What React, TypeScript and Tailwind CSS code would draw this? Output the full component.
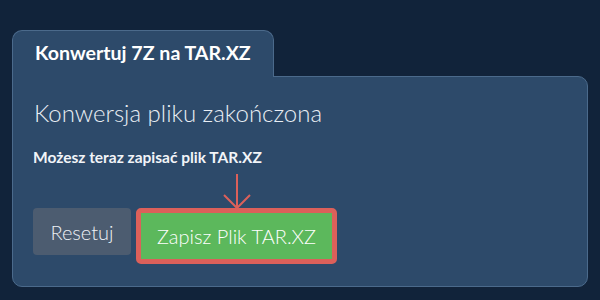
export default function App() {
  return (
    <div
      className="w-[600px] h-[300px] bg-[#11233a] pt-[30px] px-[12px]"
      style={{ fontFamily: "Lato, 'Open Sans', sans-serif" }}
    >
      <div className="relative z-10 -mb-px w-[262px] h-[47px] bg-[#2d4a6a] border border-b-0 border-[#4b6a8b] rounded-t-[10px] pl-[22px] pt-[9px]">
        <span className="text-[19.6px] font-bold text-white leading-[26px]">Konwertuj 7Z na TAR.XZ</span>
      </div>
      <div className="w-[576px] h-[211px] bg-[#2d4a6a] border border-[#4b6a8b] rounded-b-[10px] rounded-tr-[10px] px-5 pt-[20px]">
        <h2 className="text-[24px] font-light text-[#e9eef4] leading-[32px] pl-[1px]">Konwersja pliku zakończona</h2>
        <p className="mt-[18px] text-[15.5px] font-bold text-[#f1f4f8] leading-[20px]">Możesz teraz zapisać plik TAR.XZ</p>
        <div className="mt-[41px] flex items-start gap-[5px]">
          <button className="w-[98px] h-[47px] rounded-[4px] bg-[#4c5c70] text-[20px] font-light text-[#eef1f5]">Resetuj</button>
          <div className="relative rounded-[5px] border-[5px] border-[#dc605a]">
            <svg
              className="absolute left-1/2 -translate-x-1/2 bottom-full mb-[3px]"
              width="30"
              height="36"
              viewBox="0 0 30 36"
              fill="none"
              stroke="#dc605a"
              strokeWidth="2"
            >
              <line x1="15" y1="0" x2="15" y2="34" />
              <polyline points="2,21 15,34 28,21" />
            </svg>
            <button className="w-[191px] h-[46px] bg-[#5cb85c] text-[20px] font-light text-white">Zapisz Plik TAR.XZ</button>
          </div>
        </div>
      </div>
    </div>
  );
}
